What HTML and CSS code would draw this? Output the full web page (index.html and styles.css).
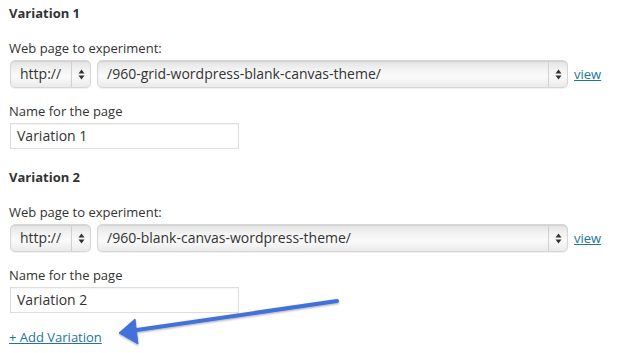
FILE: index.html
```html
<!DOCTYPE html>
<html>
<head>
<meta charset="utf-8">
<link rel="stylesheet" href="styles.css">
</head>
<body>
<div class="wrap">
  <section class="variation">
    <h3 class="heading">Variation 1</h3>
    <label class="label">Web page to experiment:</label>
    <div class="url-row">
      <div class="select select-proto">
        <span class="select-text">http://</span>
        <span class="select-arrows"><svg width="7" height="11" viewBox="0 0 7 11"><path d="M3.5 0.5 L6.5 4.5 H0.5 Z M0.5 6.5 H6.5 L3.5 10.5 Z" fill="#333"/></svg></span>
      </div>
      <div class="select select-path">
        <span class="select-text">/960-grid-wordpress-blank-canvas-theme/</span>
        <span class="select-arrows"><svg width="7" height="11" viewBox="0 0 7 11"><path d="M3.5 0.5 L6.5 4.5 H0.5 Z M0.5 6.5 H6.5 L3.5 10.5 Z" fill="#333"/></svg></span>
      </div>
      <a class="link" href="#">view</a>
    </div>
    <label class="label label-name">Name for the page</label>
    <div class="input">Variation 1</div>
  </section>
  <section class="variation variation-2">
    <h3 class="heading">Variation 2</h3>
    <label class="label">Web page to experiment:</label>
    <div class="url-row">
      <div class="select select-proto">
        <span class="select-text">http://</span>
        <span class="select-arrows"><svg width="7" height="11" viewBox="0 0 7 11"><path d="M3.5 0.5 L6.5 4.5 H0.5 Z M0.5 6.5 H6.5 L3.5 10.5 Z" fill="#333"/></svg></span>
      </div>
      <div class="select select-path">
        <span class="select-text">/960-blank-canvas-wordpress-theme/</span>
        <span class="select-arrows"><svg width="7" height="11" viewBox="0 0 7 11"><path d="M3.5 0.5 L6.5 4.5 H0.5 Z M0.5 6.5 H6.5 L3.5 10.5 Z" fill="#333"/></svg></span>
      </div>
      <a class="link" href="#">view</a>
    </div>
    <label class="label label-name">Name for the page</label>
    <div class="input">Variation 2</div>
  </section>
  <a class="link add-link" href="#">+ Add Variation</a>
</div>
<svg class="arrow" width="631" height="353" viewBox="0 0 631 353">
  <defs>
    <filter id="sh" x="-10%" y="-10%" width="120%" height="140%">
      <feDropShadow dx="0" dy="1" stdDeviation="1" flood-color="#000" flood-opacity="0.35"/>
    </filter>
  </defs>
  <g filter="url(#sh)" fill="#4372d9" stroke="#4372d9">
    <line x1="337" y1="301" x2="130" y2="331" stroke-width="4" stroke-linecap="round"/>
    <polygon points="119,333 135,319 138,344" stroke-width="1" stroke-linejoin="round"/>
  </g>
</svg>
</body>
</html>
```

FILE: styles.css
```css
html, body {
  margin: 0;
  padding: 0;
  background: #ffffff;
}

body {
  position: relative;
  width: 631px;
  height: 353px;
  overflow: hidden;
  font-family: "Open Sans", "Liberation Sans", sans-serif;
  font-size: 13px;
  line-height: 18px;
  color: #333333;
}

.wrap {
  display: flex;
  flex-direction: column;
  align-items: flex-start;
  padding: 4px 0 0 9px;
}

.variation {
  display: flex;
  flex-direction: column;
  align-items: flex-start;
}

.variation-2 {
  margin-top: 19px;
}

.heading {
  margin: 0;
  font-size: 13px;
  font-weight: 700;
  line-height: 18px;
}

.label {
  display: block;
  margin-top: 17px;
  font-size: 13px;
  line-height: 18px;
}

.label-name {
  margin-top: 14px;
}

.url-row {
  display: flex;
  align-items: center;
  gap: 6px;
  margin-top: 3px;
  margin-left: 1px;
}

.select {
  display: flex;
  align-items: stretch;
  height: 28px;
  box-sizing: border-box;
  border: 1px solid #d6d6d6;
  border-radius: 5px;
  background: linear-gradient(to bottom, #e4e4e4 0%, #f3f3f3 35%, #fafafa 60%, #ebebeb 100%);
  box-shadow: inset 0 1px 1px rgba(0, 0, 0, 0.08), 0 1px 1px rgba(0, 0, 0, 0.06);
}

.select-proto {
  width: 81px;
}

.select-path {
  width: 471px;
}

.select-text {
  flex: 1;
  display: flex;
  align-items: center;
  padding-left: 9px;
  font-size: 14px;
  color: #333333;
  white-space: nowrap;
  overflow: hidden;
}

.select-arrows {
  width: 18px;
  display: flex;
  align-items: center;
  justify-content: center;
  border-left: 1px solid #d0d0d0;
}

.link {
  color: #21759b;
  text-decoration: underline;
  font-size: 13px;
}

.input {
  margin-top: 3px;
  margin-left: 1px;
  width: 229px;
  height: 26px;
  box-sizing: border-box;
  border: 1px solid #dddddd;
  box-shadow: inset 0 1px 2px rgba(0, 0, 0, 0.05);
  padding-left: 6px;
  display: flex;
  align-items: center;
  font-size: 14px;
  color: #333333;
}

.add-link {
  margin-top: 15px;
}

.arrow {
  position: absolute;
  left: 0;
  top: 0;
  pointer-events: none;
}
```
